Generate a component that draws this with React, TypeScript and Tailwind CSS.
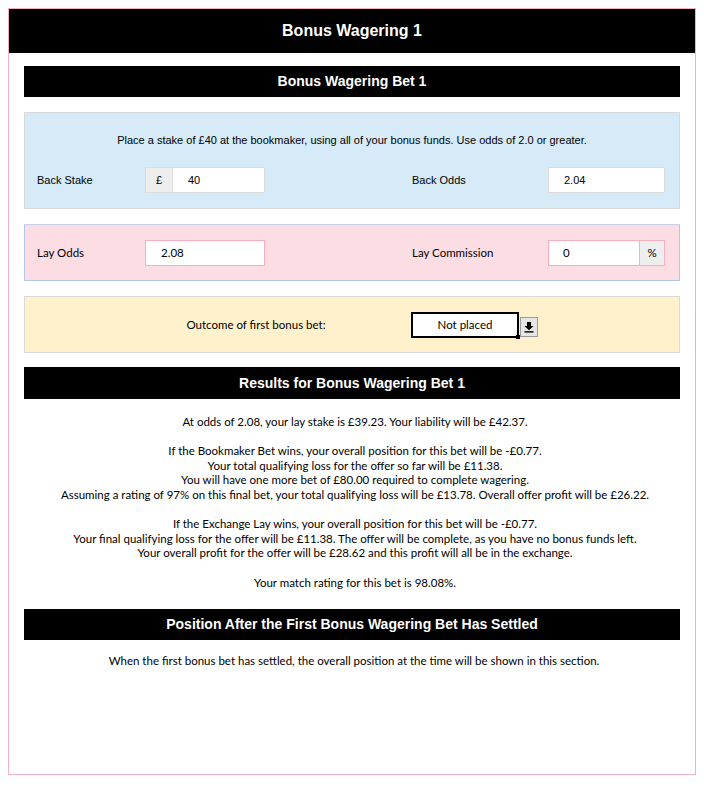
import React from 'react';

const arial = "font-['Liberation_Sans',Arial,sans-serif]";
const lato = "font-['Lato','Carlito',sans-serif]";

// black section heading bar
const SectionBar = ({ title, className = '' }: { title: string; className?: string }) => (
  <div
    className={`h-[31px] bg-black text-white flex items-center justify-center text-[14px] font-bold ${arial} ${className}`}
  >
    {title}
  </div>
);

const SelectArrow = () => (
  <div className="w-[18px] h-[20px] mt-[5px] ml-[1px] bg-[#e6e6e6] border border-[#9a9a9a] flex items-center justify-center">
    <svg width="10" height="12" viewBox="0 0 10 12">
      <path d="M3 1h4v4h2.5L5 9.2 0.5 5H3z" fill="#000" />
      <rect x="0.5" y="10.2" width="9" height="1.4" fill="#000" />
    </svg>
  </div>
);

const resultLines: string[][] = [
  ['At odds of 2.08, your lay stake is £39.23. Your liability will be £42.37.'],
  [
    'If the Bookmaker Bet wins, your overall position for this bet will be -£0.77.',
    'Your total qualifying loss for the offer so far will be £11.38.',
    'You will have one more bet of £80.00 required to complete wagering.',
    'Assuming a rating of 97% on this final bet, your total qualifying loss will be £13.78. Overall offer profit will be £26.22.',
  ],
  [
    'If the Exchange Lay wins, your overall position for this bet will be -£0.77.',
    'Your final qualifying loss for the offer will be £11.38. The offer will be complete, as you have no bonus funds left.',
    'Your overall profit for the offer will be £28.62 and this profit will all be in the exchange.',
  ],
  ['Your match rating for this bet is 98.08%.'],
];

export default function App() {
  return (
    <div className="bg-white min-h-[786px] pt-2">
      <div className="mx-2 h-[767px] border border-[#f4b0c0]">
        <div className={`h-[44px] bg-black text-white flex items-center justify-center text-[16px] font-bold ${arial}`}>
          Bonus Wagering 1
        </div>

        <div className="px-[15px]">
          <SectionBar title="Bonus Wagering Bet 1" className="mt-[13px]" />

          {/* back bet */}
          <div className={`mt-[15px] h-[97px] bg-[#d6eaf8] border border-[#d9d9d9] ${arial} text-[11px] text-black`}>
            <p className="text-center pt-[20px] leading-[14px]">
              Place a stake of £40 at the bookmaker, using all of your bonus funds. Use odds of 2.0 or greater.
            </p>
            <div className="flex items-center mt-[20px] pl-[12px]">
              <span className="w-[108px]">Back Stake</span>
              <div className="flex h-[26px] w-[120px] border border-[#dcdcdc] bg-white">
                <span className="w-[27px] bg-[#eeeeee] border-r border-[#dcdcdc] flex items-center justify-center">£</span>
                <span className="flex-1 flex items-center pl-[15px]">40</span>
              </div>
              <span className="ml-[147px] w-[136px]">Back Odds</span>
              <div className="h-[26px] w-[117px] border border-[#dcdcdc] bg-white flex items-center pl-[15px]">2.04</div>
            </div>
          </div>

          {/* lay bet */}
          <div className={`mt-[15px] h-[57px] bg-[#fddde4] border border-[#b4c7e7] border-t-[#c9d3ec] ${lato} text-[11.5px] text-black flex items-center pl-[12px]`}>
            <span className="w-[108px]">Lay Odds</span>
            <div className="h-[26px] w-[120px] border border-[#f8b0c0] bg-white flex items-center pl-[15px]">2.08</div>
            <span className="ml-[147px] w-[136px]">Lay Commission</span>
            <div className="flex h-[26px] w-[117px] border border-[#f8b0c0] bg-white">
              <span className="flex-1 flex items-center pl-[14px]">0</span>
              <span className="w-[25px] bg-[#eeeeee] border-l border-[#f8b0c0] flex items-center justify-center">%</span>
            </div>
          </div>

          {/* outcome */}
          <div className={`mt-[15px] h-[57px] bg-[#fff1cc] border border-[#d9d9d9] ${lato} text-[11.5px] text-black flex items-center pl-[120px]`}>
            <span className="w-[222px] text-center">Outcome of first bonus bet:</span>
            <div className="ml-[44px] flex items-start">
              <div className="relative w-[108px] h-[26px] border-2 border-black bg-white flex items-center justify-center">
                Not placed
                <span className="absolute -right-[3px] -bottom-[3px] w-[4px] h-[4px] bg-black" />
              </div>
              <SelectArrow />
            </div>
          </div>

          <SectionBar title="Results for Bonus Wagering Bet 1" className="mt-[14px] h-[32px]" />

          <div className={`${lato} text-[11.5px] leading-[14.6px] text-black text-center mt-[16px] pl-[6px]`}>
            {resultLines.map((para, i) => (
              <div key={i} className={i > 0 ? 'mt-[14.6px]' : ''}>
                {para.map((line) => (
                  <p key={line}>{line}</p>
                ))}
              </div>
            ))}
          </div>

          <SectionBar title="Position After the First Bonus Wagering Bet Has Settled" className="mt-[19px]" />

          <p className={`${lato} text-[11.5px] leading-[14.6px] text-black text-center mt-[14px] pl-[4px]`}>
            When the first bonus bet has settled, the overall position at the time will be shown in this section.
          </p>
        </div>
      </div>
    </div>
  );
}
